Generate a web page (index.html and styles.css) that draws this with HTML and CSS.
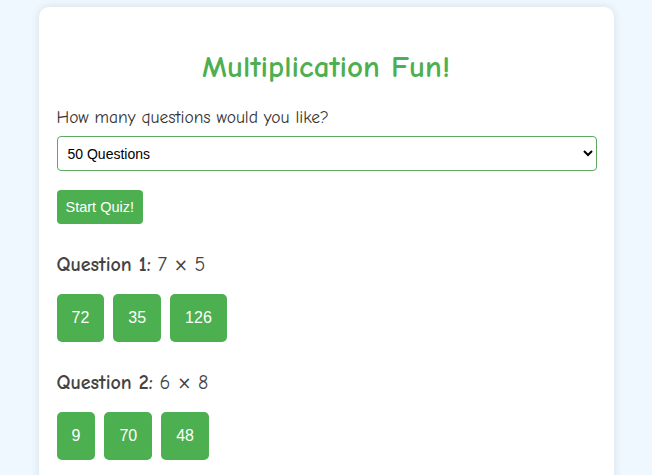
FILE: index.html
```html
<!DOCTYPE html>
<html>
<head>
<meta charset="utf-8">
<link rel="stylesheet" href="styles.css">
</head>
<body>
<div class="container">
  <h1 class="title">Multiplication Fun!</h1>
  <label class="label" for="count">How many questions would you like?</label>
  <select id="count" class="select">
    <option>50 Questions</option>
  </select>
  <button class="start">Start Quiz!</button>
  <div class="question">
    <p class="q-text"><strong>Question 1:</strong> 7 <span class="times">×</span> 5</p>
    <div class="answers">
      <button class="answer">72</button>
      <button class="answer">35</button>
      <button class="answer">126</button>
    </div>
  </div>
  <div class="question">
    <p class="q-text"><strong>Question 2:</strong> 6 <span class="times">×</span> 8</p>
    <div class="answers">
      <button class="answer">9</button>
      <button class="answer">70</button>
      <button class="answer">48</button>
    </div>
  </div>
</div>
</body>
</html>
```
FILE: styles.css
```css
html, body {
  margin: 0;
  background: #f0f8ff;
  font-family: "Comic Sans MS", "Comic Neue", "Lato", sans-serif;
}
body {
  padding-top: 7px;
  height: 475px;
  overflow: hidden;
}
.container {
  width: 539px;
  margin: 0 auto;
  padding: 18px;
  background: #fff;
  border-radius: 10px;
  box-shadow: 0 0 10px rgba(0, 0, 0, 0.1);
  min-height: 600px;
}
.title {
  color: #4caf50;
  text-align: center;
  font-size: 31px;
  font-weight: bold;
  margin: 24px 0 22px;
  line-height: 36px;
}
.label {
  display: block;
  font-size: 17.5px;
  color: #333;
  line-height: 20px;
  margin-bottom: 9px;
}
.select {
  display: block;
  width: 540px;
  height: 35px;
  padding: 0 6px;
  font-family: Arial, "Liberation Sans", sans-serif;
  font-size: 14px;
  color: #000;
  border: 1px solid #5fa862;
  border-radius: 4px;
  background: #fff;
  margin-bottom: 19px;
}
.start {
  display: block;
  height: 34px;
  padding: 0 9px;
  background: #4caf50;
  color: #fff;
  border: none;
  border-radius: 4px;
  font-family: Arial, "Liberation Sans", sans-serif;
  font-size: 14.5px;
  margin-bottom: 29px;
}
.question {
  margin-bottom: 29px;
}
.q-text {
  margin: 0 0 17px;
  font-size: 20px;
  line-height: 24px;
  color: #444;
}
.times {
  font-family: "DejaVu Sans", sans-serif;
  font-size: 17px;
}
.answers {
  display: flex;
  gap: 9px;
}
.answer {
  height: 48px;
  padding: 0 15px;
  background: #4caf50;
  color: #fff;
  border: none;
  border-radius: 5px;
  font-family: Arial, "Liberation Sans", sans-serif;
  font-size: 16px;
}
```
